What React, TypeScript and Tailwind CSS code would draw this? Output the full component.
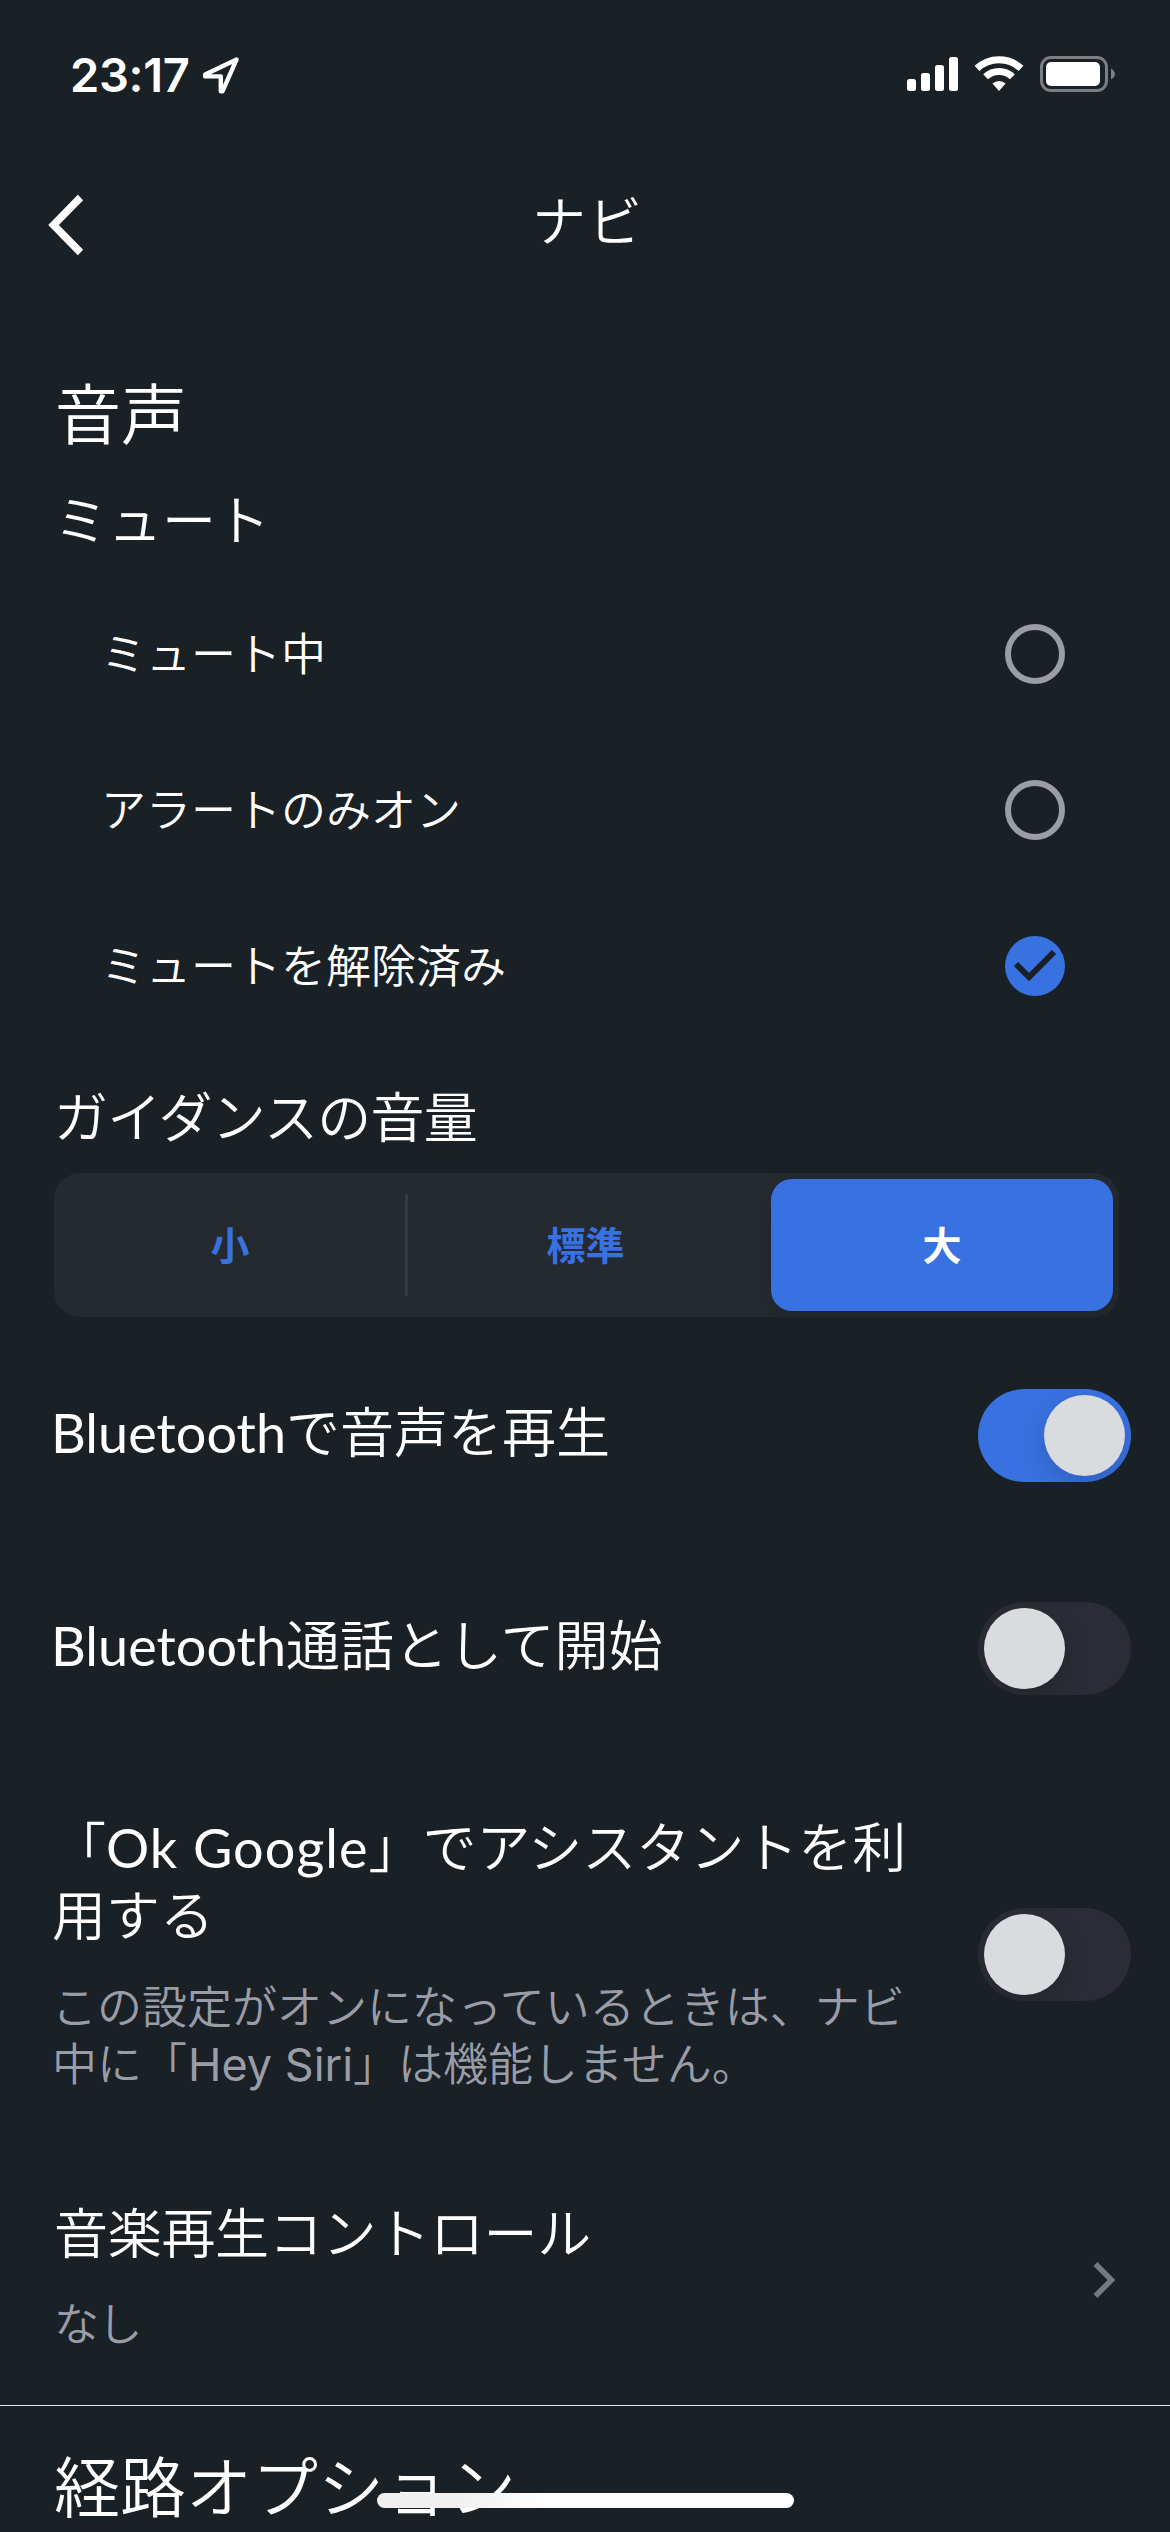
import { useState } from "react";
import type { ReactNode } from "react";

const muteOptions = ["ミュート中", "アラートのみオン", "ミュートを解除済み"];
const volumes = ["小", "標準", "大"];

function StatusBar() {
    return (
        <div className="flex h-[147px] items-start justify-between pl-[70px] pr-[54px] pt-[54px]">
            <div className="flex items-center gap-[12px]">
                <span className="font-['Inter'] text-[47px] font-semibold leading-[42px] tracking-[-0.3px]">23:17</span>
                <svg width="38" height="38" viewBox="0 0 38 38" fill="none" stroke="white" strokeWidth="4.4" strokeLinejoin="round">
                    <path d="M34.6 3.4 L3.2 18.6 L3.2 20.4 L18.8 20.4 L18.8 35.2 L20.6 35.2 Z" />
                </svg>
            </div>
            <svg width="209" height="40" viewBox="0 0 209 40">
                <g fill="white">
                    <rect x="0" y="25" width="9" height="12" rx="2.5" />
                    <rect x="14" y="19" width="9" height="18" rx="2.5" />
                    <rect x="28" y="11" width="9" height="26" rx="2.5" />
                    <rect x="42" y="3" width="9" height="34" rx="2.5" />
                </g>
                <g fill="none" stroke="white" strokeWidth="7">
                    <path d="M70 14.4 A32 32 0 0 1 114 14.4" />
                    <path d="M78.6 22.8 A19.5 19.5 0 0 1 105.4 22.8" />
                </g>
                <path d="M92 37 L85.4 29.6 A9.4 9.4 0 0 1 98.6 29.6 Z" fill="white" />
                <rect x="134.5" y="3.5" width="65" height="33" rx="9.5" fill="none" stroke="#7b7f83" strokeWidth="3" />
                <rect x="139" y="8" width="54" height="24" rx="5" fill="white" />
                <path d="M204 14.5 Q208 17 208 20 Q208 23 204 25.5 Z" fill="#7b7f83" />
            </svg>
        </div>
    );
}

function Radio({ checked }: { checked: boolean }) {
    if (!checked) {
        return <span className="size-[60px] rounded-full border-6 border-[#9a9ca6]" />;
    }
    return (
        <span className="size-[60px] rounded-full bg-[#3871e0]">
            <svg width="60" height="60" viewBox="0 0 60 60" fill="none" stroke="#192026" strokeWidth="6">
                <path d="M11 28 L24 41 L49 16" />
            </svg>
        </span>
    );
}

function Toggle({ on, onChange }: { on: boolean; onChange: () => void }) {
    return (
        <button
            onClick={onChange}
            className={`flex h-[93px] w-[153px] shrink-0 items-center overflow-hidden rounded-full p-[6px] ${on ? "justify-end bg-[#3871e0]" : "justify-start bg-[#2a2d35]"}`}
        >
            <span className="size-[81px] rounded-full bg-[#dadbdf] shadow-[0_9px_24px_rgba(0,0,0,0.15)]" />
        </button>
    );
}

// Latin words are set a little heavier than the kana around them
function Latin({ children }: { children: ReactNode }) {
    return <span className="font-['Lato'] font-normal">{children}</span>;
}

export default function App() {
    const [mute, setMute] = useState(2);
    const [volume, setVolume] = useState(2);
    const [bluetooth, setBluetooth] = useState(true);
    const [call, setCall] = useState(false);
    const [assistant, setAssistant] = useState(false);

    return (
        <div lang="ja" className="relative h-[2532px] w-[1170px] overflow-hidden bg-[#192026] font-['Noto_Sans_CJK_JP',sans-serif] font-[350] text-white">
            <StatusBar />

            <header className="grid h-[223px] grid-cols-[1fr_auto_1fr] items-start px-[48px]">
                <svg className="mt-[46px]" width="36" height="64" viewBox="0 0 36 64" fill="none" stroke="white" strokeWidth="7.5">
                    <path d="M32.5 4.5 L5.5 32 L32.5 59.5" />
                </svg>
                <h1 className="mt-[40px] h-[64px] pl-[6px] text-[54px] leading-[64px] tracking-[2px]">ナビ</h1>
            </header>

            <h2 className="h-[80px] pl-[55px] text-[66px] leading-[80px]">音声</h2>
            <h3 className="mt-[36px] h-[64px] pl-[54px] text-[54px] leading-[64px]">ミュート</h3>

            <div className="mt-[26px]">
                {muteOptions.map((label, i) => (
                    <button key={label} onClick={() => setMute(i)} className="flex h-[156px] w-full items-center justify-between pl-[101px] pr-[105px]">
                        <span className="pb-[4px] text-[45px] leading-[56px]">{label}</span>
                        <Radio checked={mute === i} />
                    </button>
                ))}
            </div>

            <h3 className="mt-[39px] h-[64px] pl-[54px] text-[54px] leading-[64px] tracking-[-0.7px]">ガイダンスの音量</h3>
            <div className="ml-[54px] mt-[26px] flex h-[144px] w-[1065px] items-center overflow-hidden rounded-[26px] bg-[#242a30] p-[6px]">
                {volumes.map((label, i) => (
                    <div key={label} className="flex h-full items-center">
                        {i > 0 && <span className={`ml-[3px] mr-[7.5px] h-[102px] w-[3px] rounded-full ${i === volume || i - 1 === volume ? "" : "bg-[#363942]"}`} />}
                        <button
                            onClick={() => setVolume(i)}
                            className={`h-full w-[342px] rounded-[21px] pb-[4px] text-[39px] font-bold ${i === volume ? "bg-[#3871e0] text-white shadow-[0_9px_24px_rgba(0,0,0,0.12)]" : "pr-[2px] text-[#3871e0]"}`}
                        >
                            {label}
                        </button>
                    </div>
                ))}
            </div>

            <div className="mt-[12px] flex h-[213px] items-center justify-between pl-[51px] pr-[39px]">
                <p className="mb-[11px] h-[64px] text-[54px] leading-[64px]"><Latin>Bluetooth</Latin>で音声を再生</p>
                <Toggle on={bluetooth} onChange={() => setBluetooth(!bluetooth)} />
            </div>
            <div className="flex h-[213px] items-center justify-between pl-[51px] pr-[39px]">
                <p className="mb-[11px] h-[64px] text-[54px] leading-[64px]"><Latin>Bluetooth</Latin>通話として開始</p>
                <Toggle on={call} onChange={() => setCall(!call)} />
            </div>
            <div className="flex h-[399px] items-center justify-between pl-[52px] pr-[39px]">
                <div className="mb-[8px] whitespace-nowrap">
                    <p className="h-[68px] text-[54px] leading-[68px]">「<span className="tracking-[1px]"><Latin>Ok Google</Latin></span>」でアシスタントを利</p>
                    <p className="h-[68px] text-[54px] leading-[68px]">用する</p>
                    <p className="mt-[29px] h-[57px] text-[45px] leading-[57px] text-[#9a9ca6]">この設定がオンになっているときは、ナビ</p>
                    <p className="h-[57px] text-[45px] leading-[57px] text-[#9a9ca6]">中に「<span className="ml-px font-['Inter'] font-normal">Hey Siri</span>」は機能しません。</p>
                </div>
                <Toggle on={assistant} onChange={() => setAssistant(!assistant)} />
            </div>

            <div className="flex h-[252px] items-center justify-between border-b border-[#e4e6e8] pl-[54px] pr-[54px]">
                <div className="mb-[10px]">
                    <p className="h-[64px] text-[54px] leading-[64px] tracking-[-0.3px]">音楽再生コントロール</p>
                    <p className="mt-[31px] h-[56px] text-[45px] leading-[56px] tracking-[-1.5px] text-[#9a9ca6]">なし</p>
                </div>
                <svg width="23" height="38" viewBox="0 0 23 38" fill="none" stroke="#76797d" strokeWidth="5.5">
                    <path d="M2.5 3 L18.5 19 L2.5 35" />
                </svg>
            </div>

            <h2 className="mt-[37px] h-[80px] pl-[54px] text-[66px] leading-[80px]">経路オプション</h2>

            {/* home indicator floats over the list */}
            <div className="absolute bottom-[24px] left-[377px] h-[15px] w-[417px] rounded-full bg-linear-to-r from-[#f0f0f0] from-20% to-white to-40%" />
        </div>
    );
}
